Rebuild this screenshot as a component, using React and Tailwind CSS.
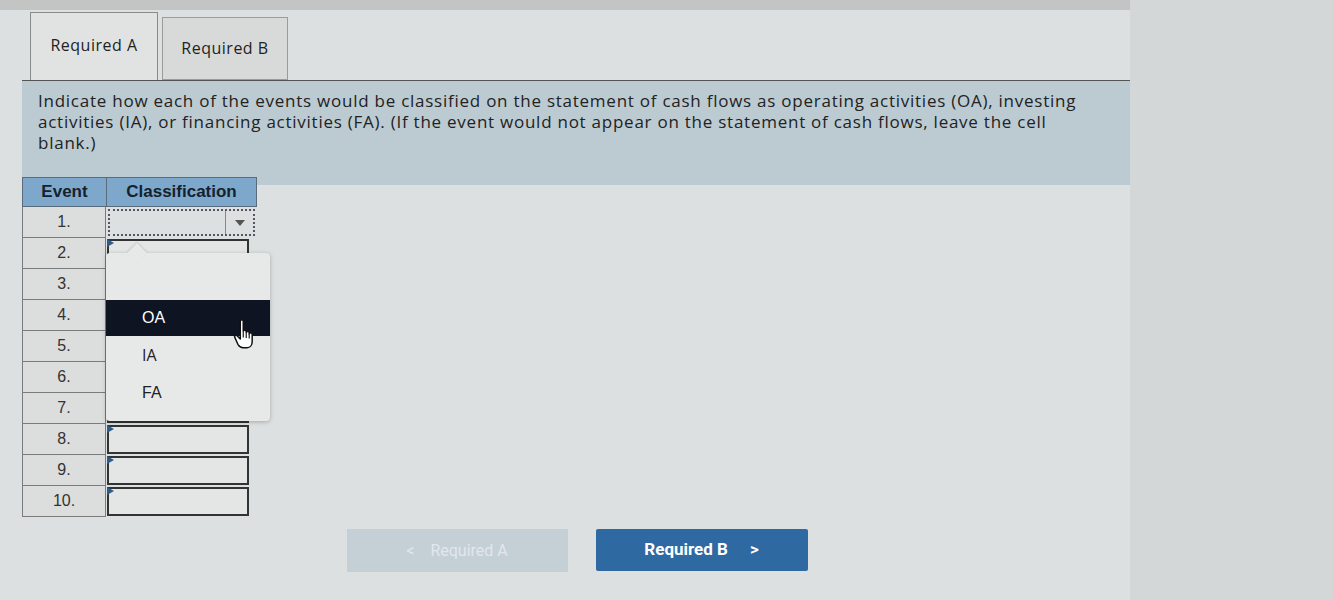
import React from "react";

function Hand() {
  return (
    <svg width="30" height="32" viewBox="0 0 26 28" className="absolute left-[231px] top-[318px]">
      <path
        d="M8 2.5c0-1.1 2.6-1.1 2.6 0v9.2c0-1.2 2.6-1.2 2.6 0v1c0-1.2 2.6-1.2 2.6 0v1.2c0-1.2 2.6-1.2 2.6 0v6.8c0 2.8-1.6 5.3-4.5 5.3h-3.6c-2.2 0-3.3-1.3-4.4-3L3.2 17c-.8-1.2.9-2.6 2-1.5L8 18.4z"
        fill="#ffffff"
        stroke="#111"
        strokeWidth="1.3"
        strokeLinejoin="round"
      />
      <path d="M10.6 12v5M13.2 13v4.5M15.8 14v4" stroke="#111" strokeWidth="1" />
    </svg>
  );
}

function ClassCell({ first }) {
  if (first) {
    return (
      <div className="h-full w-full p-[2px]">
        <div className="h-full w-full border-2 border-dotted border-[#556] flex">
          <div className="flex-1" />
          <div className="w-[28px] border-l border-[#888] flex items-center justify-center">
            <svg width="10" height="6" viewBox="0 0 10 6">
              <path d="M0 0h10L5 6z" fill="#555" />
            </svg>
          </div>
        </div>
      </div>
    );
  }
  return (
    <div className="h-full w-full py-[1px] pl-[1px] pr-[8px]">
      <div className="relative h-full w-full border-2 border-[#333] bg-[#e4e6e6]">
        <svg width="7" height="8" viewBox="0 0 7 8" className="absolute left-[-2px] top-[-2px]">
          <path d="M0 0L7 4L0 8z" fill="#2d5b8a" />
        </svg>
      </div>
    </div>
  );
}

const VERD = "'Open Sans', sans-serif";

export default function App() {
  const rows = [1, 2, 3, 4, 5, 6, 7, 8, 9, 10];
  return (
    <div className="w-[1333px] h-[600px] overflow-hidden flex bg-[#d6dada]">
      <div className="w-[1130px] flex flex-col bg-[#dde0e0] relative">
        <div className="h-[10px] bg-[#c3c5c5]" />
        <div className="flex items-start pl-[30px] mt-[2px] h-[68px] tracking-[0.5px]" style={{ fontFamily: VERD }}>
          <div className="w-[128px] h-[68px] border border-b-0 border-[#8a8c8c] bg-[#e1e3e3] flex items-start justify-center pt-[20px] text-[16px] text-[#222]">
            Required A
          </div>
          <div className="ml-[4px] mt-[5px] w-[126px] h-[63px] border border-[#9a9c9c] bg-[#d8dada] flex items-start justify-center pt-[18px] text-[16px] text-[#222]">
            Required B
          </div>
        </div>
        <div
          className="ml-[22px] w-[1108px] border-t border-[#555] bg-[#bccbd2] px-[16px] pt-[9px] pb-[32px] text-[17px] leading-[21px] tracking-[0.75px] text-[#222] whitespace-nowrap"
          style={{ fontFamily: VERD }}
        >
          Indicate how each of the events would be classified on the statement of cash flows as operating activities (OA), investing
          <br />
          activities (IA), or financing activities (FA). (If the event would not appear on the statement of cash flows, leave the cell
          <br />
          blank.)
        </div>

        <div className="relative ml-[22px] mt-[-8px] w-[235px]" style={{ fontFamily: "'Liberation Sans', Arial, sans-serif" }}>
          <div className="flex h-[30px] bg-[#7ea8cb] border border-[#5a6c7c] text-[17px] font-bold text-[#14222f]">
            <div className="w-[84px] border-r border-[#5a6c7c] flex items-center justify-center">Event</div>
            <div className="flex-1 flex items-center justify-center">Classification</div>
          </div>
          {rows.map((n) => (
            <div key={n} className="flex h-[31px]">
              <div className="w-[84px] bg-[#dcdddd] border border-t-0 border-[#7a7c7c] flex items-center justify-center text-[16px] text-[#333]">
                {n}.
              </div>
              <div className="flex-1">
                <ClassCell first={n === 1} />
              </div>
            </div>
          ))}

          <div className="absolute left-[84px] top-[76px] w-[164px] h-[168px] rounded-[4px] bg-[#e7e9e9] shadow-[0_1px_4px_rgba(0,0,0,0.25)] flex flex-col">
            <div className="absolute left-[24px] top-[-7px] w-[14px] h-[14px] rotate-45 bg-[#e7e9e9] shadow-[-1px_-1px_2px_rgba(0,0,0,0.12)]" />
            <div className="h-[47px]" />
            <div className="relative h-[36px] bg-[#0e1422] text-white text-[16px] flex items-center pl-[36px]">OA</div>
            <div className="h-[38px] text-[16px] text-[#222] flex items-center pl-[36px]" style={{ fontFamily: VERD }}>
              IA
            </div>
            <div className="h-[38px] text-[16px] text-[#222] flex items-center pl-[36px]">FA</div>
          </div>
        </div>

        <Hand />

        <div className="flex justify-center pl-[24px] mt-[12px] gap-[28px]" style={{ fontFamily: "Roboto, sans-serif" }}>
          <div className="w-[221px] h-[43px] bg-[#c5cfd6] flex items-center justify-center gap-[16px] text-[16px] text-[#e2e7eb]">
            <span>&lt;</span>
            <span>Required A</span>
          </div>
          <div className="w-[212px] h-[42px] rounded-[2px] bg-[#2f69a1] flex items-center justify-center gap-[22px] text-[17px] font-bold text-white">
            <span>Required B</span>
            <span>&gt;</span>
          </div>
        </div>
      </div>
      <div className="flex-1 bg-[#d3d7d7]" />
    </div>
  );
}
